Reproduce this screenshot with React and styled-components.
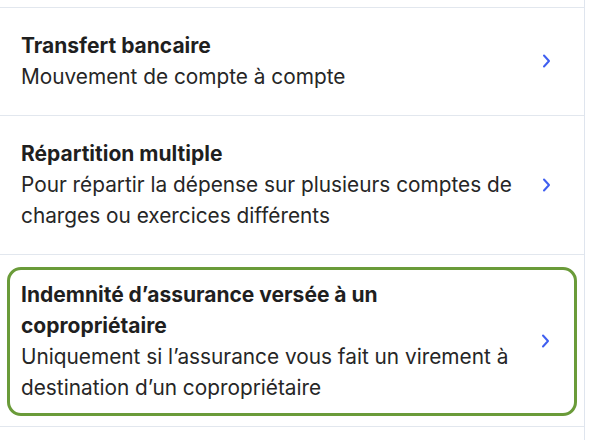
import React from 'react'
import styled, { createGlobalStyle } from 'styled-components'

const GlobalStyle = createGlobalStyle`
  html, body {
    margin: 0;
    padding: 0;
    background: #ffffff;
  }
  body {
    font-family: Inter, "Open Sans", "Liberation Sans", sans-serif;
    -webkit-font-smoothing: antialiased;
  }
`

const items = [
  {
    title: 'Transfert bancaire',
    text: 'Mouvement de compte à compte',
  },
  {
    title: 'Répartition multiple',
    text: 'Pour répartir la dépense sur plusieurs comptes de charges ou exercices différents',
  },
  {
    title: 'Indemnité d’assurance versée à un copropriétaire',
    text: 'Uniquement si l’assurance vous fait un virement à destination d’un copropriétaire',
    selected: true,
  },
]

const Chevron = () => (
  <svg width="9" height="14" viewBox="0 0 9 14" fill="none">
    <path d="M2 1.5L7 7L2 12.5" stroke="#3f5ff0" strokeWidth="2" strokeLinecap="round" strokeLinejoin="round" />
  </svg>
)

const App = () => {
  return (
    <>
      <GlobalStyle />
      <StyledList>
        <div className="list__stub" />
        {items.map((item) => (
          <Row key={item.title} $selected={item.selected}>
            <Option $selected={item.selected}>
              <div className="option__body">
                <p className="option__title">{item.title}</p>
                <p className="option__text">{item.text}</p>
              </div>
              <Chevron />
            </Option>
          </Row>
        ))}
      </StyledList>
    </>
  )
}

const StyledList = styled.div`
  width: 584px;
  height: 440px;
  border-right: 1px solid #dfe5ee;
  overflow: hidden;

  .list__stub {
    height: 7px;
    border-bottom: 1px solid #e2e7ee;
  }
`

const Row = styled.div`
  border-bottom: 1px solid #e2e7ee;
  padding: ${({ $selected }) => ($selected ? '12px 7px 10px 7px' : '0')};
`

const Option = styled.div`
  display: flex;
  align-items: center;
  gap: 22px;
  padding: ${({ $selected }) => ($selected ? '9px 24px 10px 11px' : '22px 33px 23px 21px')};
  border: ${({ $selected }) => ($selected ? '3px solid #6a9b39' : 'none')};
  border-radius: 14px;

  .option__body {
    flex: 1;
  }

  .option__title,
  .option__text {
    margin: 0;
    line-height: 31px;
  }

  .option__title {
    max-width: 440px;
    font-size: 21px;
    font-weight: 700;
    color: #1f1f1f;
  }

  .option__text {
    font-size: 20.8px;
    color: #262626;
  }

  svg {
    flex-shrink: 0;
  }
`

export default App
